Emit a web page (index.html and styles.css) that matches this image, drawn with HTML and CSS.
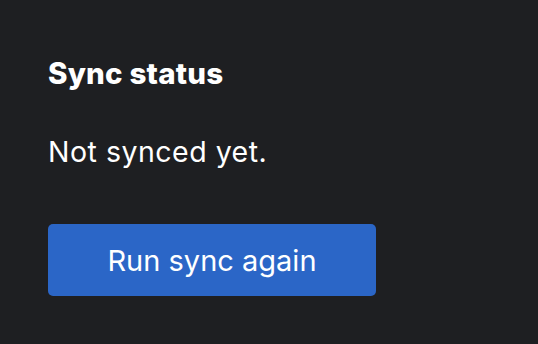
FILE: index.html
```html
<!DOCTYPE html>
<html lang="en">
<head>
<meta charset="utf-8">
<title>Sync status</title>
<link rel="stylesheet" href="styles.css">
</head>
<body>
<main class="panel">
  <h2 class="panel-title">Sync status</h2>
  <p class="panel-text">Not synced yet.</p>
  <button class="btn-primary" type="button">Run sync again</button>
</main>
</body>
</html>
```

FILE: styles.css
```css
html, body {
  margin: 0;
  padding: 0;
  background: #1e1f22;
  width: 538px;
  height: 344px;
  overflow: hidden;
}
.panel {
  display: flex;
  flex-direction: column;
  align-items: flex-start;
  padding: 52px 48px 0 48px;
  font-family: "Inter", "Noto Sans", sans-serif;
  color: #ffffff;
}
.panel-title {
  margin: 0;
  font-size: 29.5px;
  font-weight: 800;
  line-height: 42px;
  letter-spacing: 0.2px;
}
.panel-text {
  margin: 37px 0 0 0;
  font-size: 28.5px;
  font-weight: 400;
  line-height: 42px;
  letter-spacing: 0.5px;
}
.btn-primary {
  margin-top: 51px;
  width: 328px;
  height: 72px;
  border: none;
  border-radius: 5px;
  background: #2b66c7;
  color: #ffffff;
  font-family: "Inter", "Noto Sans", sans-serif;
  font-size: 29px;
  font-weight: 400;
  padding: 0;
  cursor: pointer;
}
```
